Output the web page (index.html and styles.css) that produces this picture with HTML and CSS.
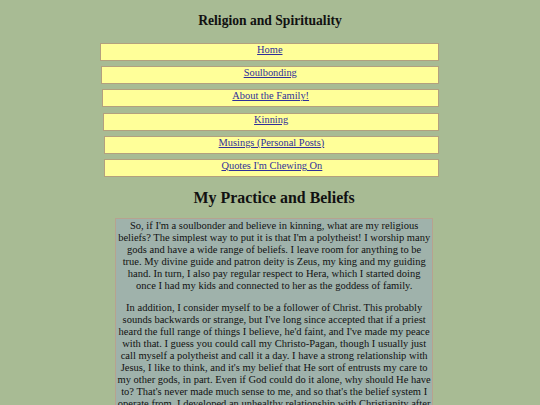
FILE: index.html
```html
<!DOCTYPE html>
<html>
<head>
<meta charset="utf-8">
<title>Religion and Spirituality</title>
<link rel="stylesheet" href="styles.css">
</head>
<body>
<h1 class="site-title">Religion and Spirituality</h1>
<nav class="nav">
  <a class="nav-item" href="#">Home</a>
  <a class="nav-item" href="#">Soulbonding</a>
  <a class="nav-item" href="#">About the Family!</a>
  <a class="nav-item" href="#">Kinning</a>
  <a class="nav-item" href="#">Musings (Personal Posts)</a>
  <a class="nav-item" href="#">Quotes I'm Chewing On</a>
</nav>
<main class="content">
  <h2 class="page-title">My Practice and Beliefs</h2>
  <div class="text-box">
    <p>So, if I'm a soulbonder and believe in kinning, what are my religious beliefs? The simplest way to put it is that I'm a polytheist! I worship many gods and have a wide range of beliefs. I leave room for anything to be true. My divine guide and patron deity is Zeus, my king and my guiding hand. In turn, I also pay regular respect to Hera, which I started doing once I had my kids and connected to her as the goddess of family.</p>
    <p>In addition, I consider myself to be a follower of Christ. This probably sounds backwards or strange, but I've long since accepted that if a priest heard the full range of things I believe, he'd faint, and I've made my peace with that. I guess you could call my Christo-Pagan, though I usually just call myself a polytheist and call it a day. I have a strong relationship with Jesus, I like to think, and it's my belief that He sort of entrusts my care to my other gods, in part. Even if God could do it alone, why should He have to? That's never made much sense to me, and so that's the belief system I operate from. I developed an unhealthy relationship with Christianity after years of being told what I had to believe, and I'm still working through it.</p>
  </div>
</main>
</body>
</html>
```
FILE: styles.css
```css
html, body {
  margin: 0;
  padding: 0;
}
body {
  background: #a8bb94;
  color: #111;
  font-family: "Liberation Serif", "Times New Roman", serif;
  font-size: 10.4px;
  line-height: 12px;
}
.site-title {
  margin: 13px 0 0;
  font-size: 13.6px;
  line-height: 15.5px;
  font-weight: bold;
  text-align: center;
}
.nav {
  display: flex;
  flex-direction: column;
  gap: 5.3px;
  width: 339px;
  margin: 14.2px 0 0 100.3px;
}
.nav-item {
  display: block;
  box-sizing: border-box;
  height: 18px;
  padding: 0 0 4px;
  background: #ffff99;
  border: 1px solid #b3a07e;
  color: #30309a;
  text-align: center;
}
.nav-item:nth-child(2) { margin-left: 0.9px; }
.nav-item:nth-child(3) { margin-left: 1.8px; }
.nav-item:nth-child(4) { margin-left: 2.6px; }
.nav-item:nth-child(5) { margin-left: 3.3px; }
.nav-item:nth-child(6) { margin-left: 4.2px; }
.content {
  width: 318.3px;
  margin: 0 0 0 115px;
}
.page-title {
  margin: 12px 0 0;
  font-size: 15.9px;
  line-height: 18px;
  font-weight: bold;
  text-align: center;
}
.text-box {
  margin-top: 11px;
  padding: 1px 1px;
  background: #9fb2ab;
  border: 1px solid #b7a28f;
  text-align: center;
  font-size: 10.515px;
}
.text-box p {
  margin: 0;
}
.text-box p + p {
  margin-top: 10px;
}
```
